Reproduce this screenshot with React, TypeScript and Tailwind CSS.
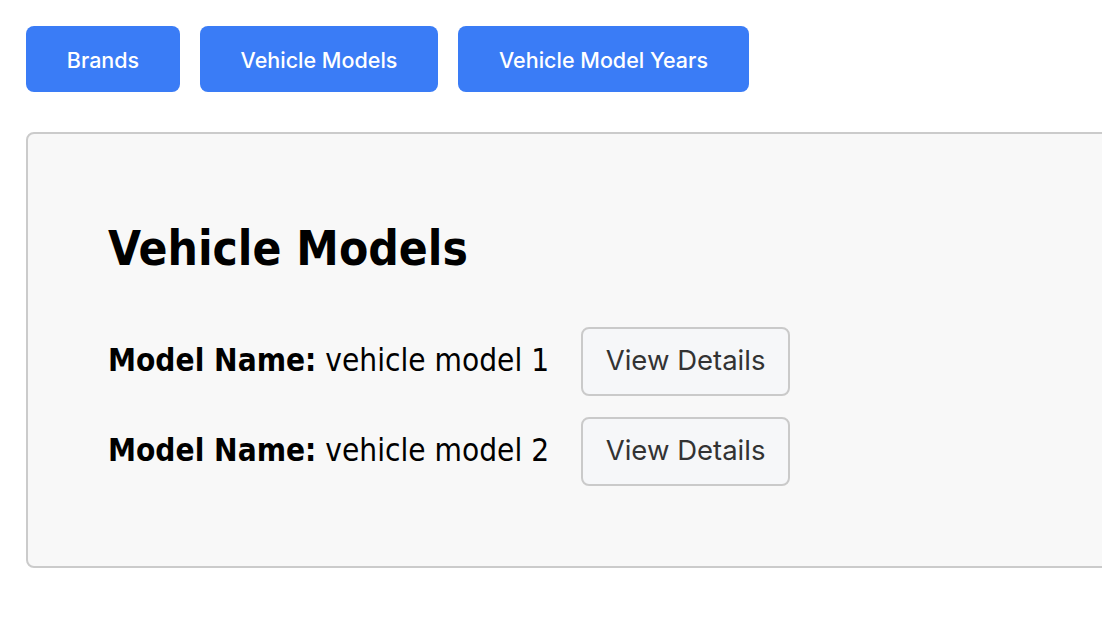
const navItems = ["Brands", "Vehicle Models", "Vehicle Model Years"];

const models = [
  { id: 1, name: "vehicle model 1" },
  { id: 2, name: "vehicle model 2" },
];

function NavButton({ label, width }: { label: string; width: string }) {
  return (
    <button
      className={`h-[66px] ${width} rounded-[8px] bg-[#3a7cf6] pt-[2px] text-[21.5px] text-white font-['Inter',sans-serif] font-medium`}
    >
      {label}
    </button>
  );
}

export default function App() {
  return (
    <div className="min-h-[636px] overflow-hidden bg-white pl-[26px] pt-[26px]">
      <nav className="flex gap-[20px]">
        <NavButton label={navItems[0]} width="w-[154px]" />
        <NavButton label={navItems[1]} width="w-[238px]" />
        <NavButton label={navItems[2]} width="w-[291px]" />
      </nav>

      <section className="mt-[40px] w-[1200px] rounded-[8px] border-2 border-[#cbcbcb] bg-[#f8f8f8] px-[80px] pt-[91px] pb-[80px] font-['DejaVu_Sans_Condensed','DejaVu_Sans',sans-serif] text-black">
        <h1 className="text-[47.5px] font-bold leading-none">Vehicle Models</h1>
        <ul className="mt-[54px] flex flex-col gap-[21px]">
          {models.map((model) => (
            <li key={model.id} className="flex items-center">
              <span className="text-[31.3px] leading-none">
                <span className="font-bold">Model Name:</span> {model.name}
              </span>
              <button className="ml-[32px] h-[69px] w-[209px] rounded-[8px] border-2 border-[#cacaca] bg-[#f6f7f9] font-['Inter',sans-serif] text-[27.5px] text-[#333]">
                View Details
              </button>
            </li>
          ))}
        </ul>
      </section>
    </div>
  );
}
